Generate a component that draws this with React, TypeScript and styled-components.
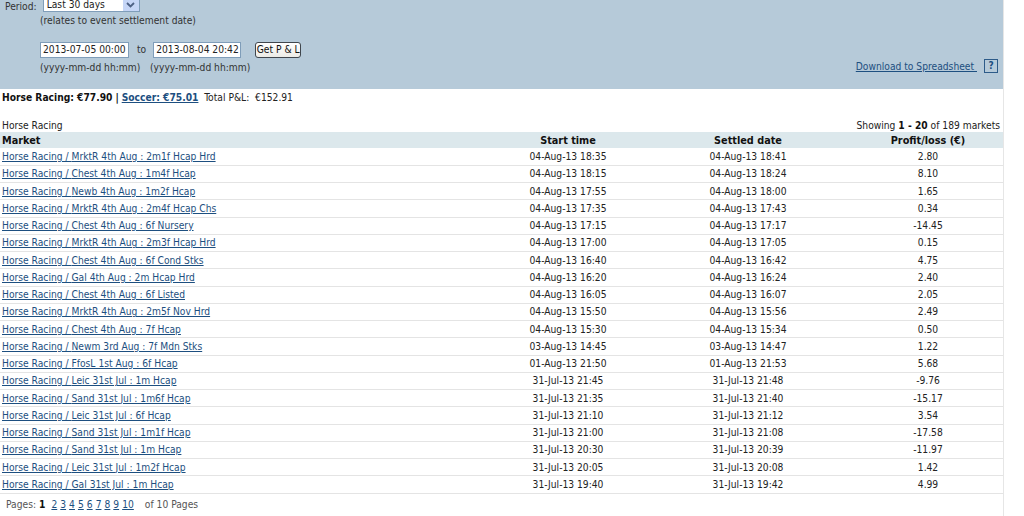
import React from "react";
import styled, { createGlobalStyle } from "styled-components";

const GlobalStyle = createGlobalStyle`
  html, body { margin: 0; padding: 0; background: #fff; }
  body {
    font-family: "DejaVu Sans Condensed", "DejaVu Sans", Tahoma, sans-serif;
    font-size: 10.2px;
    color: #222;
  }
  a { color: #1d4f80; text-decoration: underline; }
`;

const Page = styled.div`
  width: 1003px;
  min-height: 516px;
  border-right: 1px solid #e6e6e6;
  overflow: hidden;
  white-space: nowrap;
`;

const FilterPanel = styled.div`
  background: #b6cad9;
  height: 89px;
  box-sizing: border-box;
  padding: 0 5px;
  display: flex;
  flex-direction: column;
`;

const PeriodRow = styled.div`
  display: flex;
  align-items: center;
  height: 12px;
  gap: 6px;
`;

const Label = styled.span`
  color: #333;
`;

const FakeSelect = styled.div`
  width: 97px;
  height: 15px;
  margin-top: -3px;
  box-sizing: border-box;
  background: #fff;
  border: 1px solid #7f9db9;
  display: flex;
  align-items: center;
  justify-content: space-between;
  padding-left: 3px;
  color: #222;
`;

const SelectArrow = styled.div`
  width: 16px;
  height: 13px;
  background: #c6d6f7;
  display: flex;
  align-items: center;
  justify-content: center;
`;

const Indented = styled.div`
  padding-left: 35px;
  color: #333;
`;

const Note = styled(Indented)`
  margin-top: 2px;
  height: 13px;
  line-height: 13px;
`;

const DateRow = styled(Indented)`
  display: flex;
  align-items: center;
  margin-top: 14px;
  height: 17px;
`;

const DateInput = styled.div<{ $w: number }>`
  width: ${(p) => p.$w}px;
  height: 16px;
  box-sizing: border-box;
  background: #fff;
  border: 1px solid #7f9db9;
  padding: 0 2px;
  line-height: 14px;
  color: #222;
  overflow: hidden;
`;

const To = styled.span`
  margin: 0 7px 0 8px;
`;

const Button = styled.div`
  margin-left: 14px;
  width: 46px;
  height: 16px;
  box-sizing: border-box;
  border: 1px solid #40464d;
  border-radius: 3px;
  background: linear-gradient(#ffffff, #ecebe6);
  display: flex;
  align-items: center;
  justify-content: center;
  color: #111;
`;

const HintRow = styled(Indented)`
  display: flex;
  align-items: center;
  height: 16px;
  margin-top: 1px;
`;

const Hint = styled.span<{ $w?: number }>`
  width: ${(p) => (p.$w ? `${p.$w}px` : "auto")};
`;

const DownloadLink = styled.a`
  margin-left: auto;
  margin-top: -2px;
`;

const HelpBox = styled.span`
  width: 12px;
  height: 12px;
  border: 1px solid #2d5b89;
  color: #1d4f80;
  font-weight: bold;
  font-size: 10px;
  display: flex;
  align-items: center;
  justify-content: center;
  margin-top: -3px;
  margin-left: 7px;
`;

const Summary = styled.div`
  padding: 1px 2px 0;
  height: 15px;
  line-height: 15px;
`;

const Bold = styled.b`
  font-weight: bold;
  color: #111;
`;

const BoldLink = styled.a`
  font-weight: bold;
`;

const SectionHead = styled.div`
  display: flex;
  justify-content: space-between;
  align-items: center;
  margin-top: 13px;
  height: 14px;
  padding: 0 2px;
  width: 1002px;
  box-sizing: border-box;
`;

const Table = styled.table`
  width: 1002px;
  border-collapse: collapse;
  table-layout: fixed;
`;

const HeadCell = styled.th<{ $w: number; $left?: boolean }>`
  width: ${(p) => p.$w}px;
  background: #dce8ec;
  height: 16px;
  padding: 0 2px;
  font-weight: bold;
  text-align: ${(p) => (p.$left ? "left" : "center")};
  color: #111;
  font-size: 10.8px;
`;

const Row = styled.tr`
  height: 17.25px;
  border-bottom: 1px solid #e4e4e4;
`;

const Cell = styled.td<{ $left?: boolean }>`
  padding: 0 2px;
  text-align: ${(p) => (p.$left ? "left" : "center")};
  white-space: nowrap;
  color: #222;
`;

const Pager = styled.div`
  padding: 5px 6px 0;
  color: #555;
  display: flex;
  gap: 3px;
`;

const PageLinks = styled.span`
  display: flex;
  gap: 3px;
  margin-left: 3px;
  margin-right: 8px;
`;

const rows: [string, string, string, string][] = [
  ["MrktR 4th Aug : 2m1f Hcap Hrd", "04-Aug-13 18:35", "04-Aug-13 18:41", "2.80"],
  ["Chest 4th Aug : 1m4f Hcap", "04-Aug-13 18:15", "04-Aug-13 18:24", "8.10"],
  ["Newb 4th Aug : 1m2f Hcap", "04-Aug-13 17:55", "04-Aug-13 18:00", "1.65"],
  ["MrktR 4th Aug : 2m4f Hcap Chs", "04-Aug-13 17:35", "04-Aug-13 17:43", "0.34"],
  ["Chest 4th Aug : 6f Nursery", "04-Aug-13 17:15", "04-Aug-13 17:17", "-14.45"],
  ["MrktR 4th Aug : 2m3f Hcap Hrd", "04-Aug-13 17:00", "04-Aug-13 17:05", "0.15"],
  ["Chest 4th Aug : 6f Cond Stks", "04-Aug-13 16:40", "04-Aug-13 16:42", "4.75"],
  ["Gal 4th Aug : 2m Hcap Hrd", "04-Aug-13 16:20", "04-Aug-13 16:24", "2.40"],
  ["Chest 4th Aug : 6f Listed", "04-Aug-13 16:05", "04-Aug-13 16:07", "2.05"],
  ["MrktR 4th Aug : 2m5f Nov Hrd", "04-Aug-13 15:50", "04-Aug-13 15:56", "2.49"],
  ["Chest 4th Aug : 7f Hcap", "04-Aug-13 15:30", "04-Aug-13 15:34", "0.50"],
  ["Newm 3rd Aug : 7f Mdn Stks", "03-Aug-13 14:45", "03-Aug-13 14:47", "1.22"],
  ["FfosL 1st Aug : 6f Hcap", "01-Aug-13 21:50", "01-Aug-13 21:53", "5.68"],
  ["Leic 31st Jul : 1m Hcap", "31-Jul-13 21:45", "31-Jul-13 21:48", "-9.76"],
  ["Sand 31st Jul : 1m6f Hcap", "31-Jul-13 21:35", "31-Jul-13 21:40", "-15.17"],
  ["Leic 31st Jul : 6f Hcap", "31-Jul-13 21:10", "31-Jul-13 21:12", "3.54"],
  ["Sand 31st Jul : 1m1f Hcap", "31-Jul-13 21:00", "31-Jul-13 21:08", "-17.58"],
  ["Sand 31st Jul : 1m Hcap", "31-Jul-13 20:30", "31-Jul-13 20:39", "-11.97"],
  ["Leic 31st Jul : 1m2f Hcap", "31-Jul-13 20:05", "31-Jul-13 20:08", "1.42"],
  ["Gal 31st Jul : 1m Hcap", "31-Jul-13 19:40", "31-Jul-13 19:42", "4.99"],
];

export default function App() {
  return (
    <>
      <GlobalStyle />
      <Page>
        <FilterPanel>
          <PeriodRow>
            <Label>Period:</Label>
            <FakeSelect>
              <span>Last 30 days</span>
              <SelectArrow>
                <svg width="9" height="6" viewBox="0 0 9 6">
                  <path d="M1 1 L4.5 4.5 L8 1" fill="none" stroke="#4d6185" strokeWidth="1.8" />
                </svg>
              </SelectArrow>
            </FakeSelect>
          </PeriodRow>
          <Note>(relates to event settlement date)</Note>
          <DateRow>
            <DateInput $w={89}>2013-07-05 00:00</DateInput>
            <To>to</To>
            <DateInput $w={88}>2013-08-04 20:42</DateInput>
            <Button>Get P &amp; L</Button>
          </DateRow>
          <HintRow>
            <Hint $w={110}>(yyyy-mm-dd hh:mm)</Hint>
            <Hint>(yyyy-mm-dd hh:mm)</Hint>
            <DownloadLink href="#">Download to Spreadsheet&nbsp;</DownloadLink>
            <HelpBox>?</HelpBox>
          </HintRow>
        </FilterPanel>
        <Summary>
          <Bold>Horse Racing: €77.90</Bold> <Bold>|</Bold>{" "}
          <BoldLink href="#">Soccer: €75.01</BoldLink>&nbsp; Total P&amp;L: &nbsp;€152.91
        </Summary>
        <SectionHead>
          <span>Horse Racing</span>
          <span>
            Showing <Bold>1 - 20</Bold> of 189 markets
          </span>
        </SectionHead>
        <Table>
          <thead>
            <tr>
              <HeadCell $w={474} $left>Market</HeadCell>
              <HeadCell $w={176}>Start time</HeadCell>
              <HeadCell $w={176}>Settled date</HeadCell>
              <HeadCell $w={176}>Profit/loss (€)</HeadCell>
            </tr>
          </thead>
          <tbody>
            {rows.map(([m, s, d, p]) => (
              <Row key={m}>
                <Cell $left>
                  <a href="#">Horse Racing / {m}</a>
                </Cell>
                <Cell>{s}</Cell>
                <Cell>{d}</Cell>
                <Cell>{p}</Cell>
              </Row>
            ))}
          </tbody>
        </Table>
        <Pager>
          <span>Pages:</span>
          <Bold>1</Bold>
          <PageLinks>
            {[2, 3, 4, 5, 6, 7, 8, 9, 10].map((n) => (
              <a key={n} href="#">
                {n}
              </a>
            ))}
          </PageLinks>
          <span>of 10 Pages</span>
        </Pager>
      </Page>
    </>
  );
}
